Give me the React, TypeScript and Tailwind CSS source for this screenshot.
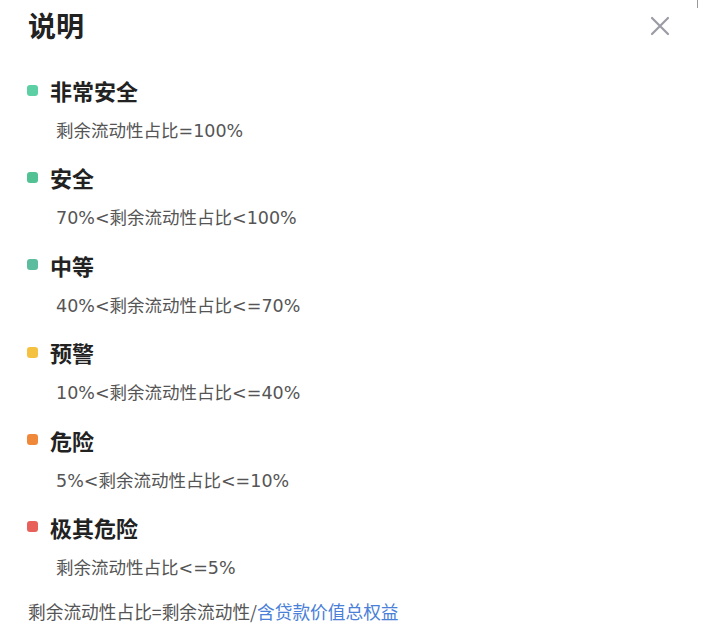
import React from "react";

const items = [
  { color: "bg-[#5dcfa5]", title: "非常安全", desc: "剩余流动性占比=100%" },
  { color: "bg-[#52c295]", title: "安全", desc: "70%<剩余流动性占比<100%" },
  { color: "bg-[#5bbc9e]", title: "中等", desc: "40%<剩余流动性占比<=70%" },
  { color: "bg-[#f5c140]", title: "预警", desc: "10%<剩余流动性占比<=40%" },
  { color: "bg-[#f0883a]", title: "危险", desc: "5%<剩余流动性占比<=10%" },
  { color: "bg-[#e8605a]", title: "极其危险", desc: "剩余流动性占比<=5%" },
];

export default function App() {
  return (
    <div
      className="w-[708px] h-[638px] bg-white relative overflow-hidden"
      style={{ fontFamily: '"Noto Sans CJK SC", "Noto Sans", sans-serif' }}
    >
      <div className="absolute right-[10px] top-0 w-[1px] h-[8px] bg-[#999]" />
      <div className="pl-[28px] pt-[7px] flex flex-col">
        <div className="flex items-center justify-between pr-[38px] h-[36px]">
          <span className="text-[28px] leading-[36px] font-bold text-[#222]">说明</span>
          <svg width="20" height="20" viewBox="0 0 20 20" className="mt-[1px]">
            <path d="M2 2 L18 18 M18 2 L2 18" stroke="#9b9ba6" strokeWidth="2.2" strokeLinecap="round" />
          </svg>
        </div>
        <div className="mt-[33px] flex flex-col gap-[20.4px]">
          {items.map((it) => (
            <div key={it.title} className="flex flex-col">
              <div className="flex items-center h-[28px]">
                <span className={`w-[11px] h-[11px] rounded-[3px] ${it.color} -ml-[1px]`} />
                <span className="ml-[12px] text-[22px] leading-[28px] font-bold text-[#222]">{it.title}</span>
              </div>
              <div
                className="mt-[15px] pl-[28px] text-[17.5px] leading-[24px] text-[#555]"
                style={{ fontFamily: '"DejaVu Sans", "Noto Sans CJK SC", sans-serif' }}
              >
                {it.desc}
              </div>
            </div>
          ))}
        </div>
        <div className="mt-[20px] text-[17.7px] leading-[22px] text-[#555]">
          剩余流动性占比=剩余流动性/<span className="text-[#4a80d8]">含贷款价值总权益</span>
        </div>
      </div>
    </div>
  );
}
